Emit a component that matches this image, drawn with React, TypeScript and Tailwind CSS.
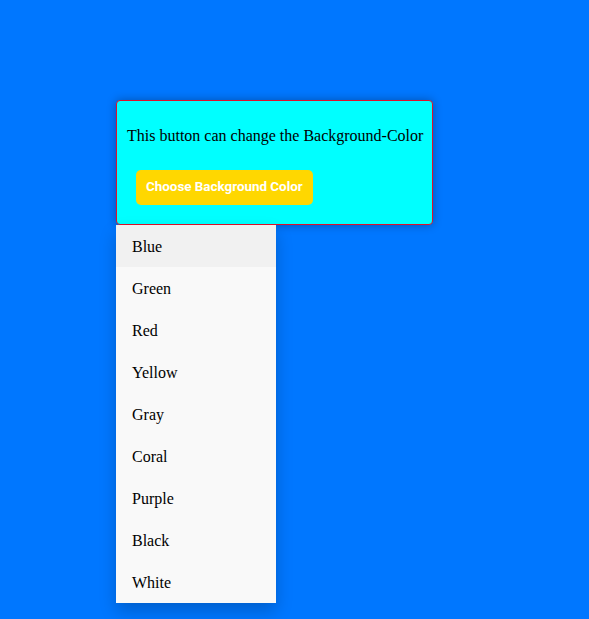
const colors = ["Blue", "Green", "Red", "Yellow", "Gray", "Coral", "Purple", "Black", "White"];

export default function App() {
  return (
    <div className="min-h-[619px] w-full bg-[#0077ff] pl-[116px] pt-[100px] font-['Liberation_Serif',serif]">
      <div className="relative w-[317px]">
        <div className="h-[125px] rounded-[4px] border border-[#e0102a] bg-[#00ffff] px-[10px] pt-[26px] shadow-[0_0_10px_rgba(0,0,0,0.3)]">
          <p className="whitespace-nowrap text-[16px] leading-[18px] text-black">
            This button can change the Background-Color
          </p>
          <button className="ml-[9px] mt-[25px] h-[35px] rounded-[5px] bg-[#ffd700] px-[10px] font-['Roboto',sans-serif] text-[13.4px] font-bold text-white">
            Choose Background Color
          </button>
        </div>
        <ul className="absolute left-0 top-full w-[160px] bg-[#f9f9f9] shadow-[0_8px_16px_rgba(0,0,0,0.2)]">
          {colors.map((c, i) => (
            <li
              key={c}
              className={`h-[42px] px-[16px] pb-[11px] pt-[13px] text-[16px] leading-[18px] text-black ${
                i === 0 ? "bg-[#f1f1f1]" : ""
              }`}
            >
              {c}
            </li>
          ))}
        </ul>
      </div>
    </div>
  );
}
